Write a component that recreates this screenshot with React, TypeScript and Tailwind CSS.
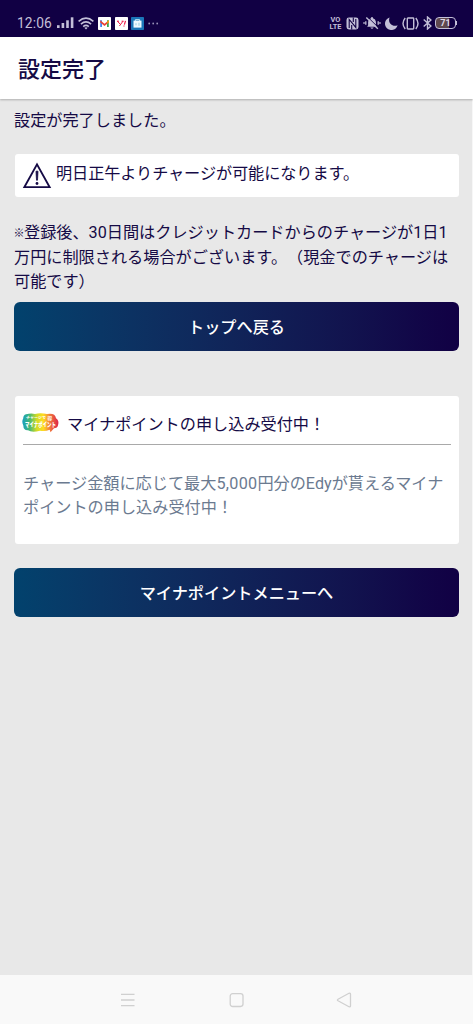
import React from 'react';

const SignalIcon = () => (
  <svg width="17" height="12" viewBox="0 0 17 12" fill="#c3bfd8">
    <rect x="0" y="8.2" width="2.6" height="2.8" />
    <rect x="4.6" y="6" width="2.6" height="5" />
    <rect x="9.2" y="3.3" width="2.6" height="7.7" />
    <rect x="13.8" y="0.3" width="2.6" height="10.7" />
  </svg>
);

const WifiIcon = () => (
  <svg width="16" height="13" viewBox="0 0 16 13" fill="none" stroke="#c3bfd8" strokeWidth="1.6">
    <path d="M0.6 4.3Q8 -2 15.4 4.3M2.9 7.1Q8 2.7 13.1 7.1M5.2 9.6Q8 7.2 10.8 9.6" />
    <path d="M6.3 10.8Q8 9.6 9.7 10.8L8 12.6Z" fill="#c3bfd8" stroke="none" />
  </svg>
);

const MailIcon = () => (
  <svg width="13" height="13" viewBox="0 0 13 13">
    <rect width="13" height="13" rx="0.8" fill="#fff" />
    <path d="M2.2 3.2H4V10H2.2Z" fill="#4285f4" />
    <path d="M9 3.2h1.8V10H9Z" fill="#34a853" />
    <path d="M2.2 3.2L6.5 6.7 10.8 3.2V5.6L6.5 9 2.2 5.6Z" fill="#e84435" />
    <path d="M9.4 4.3l1.4-1.1V5.6L9.4 6.7Z" fill="#f9bb05" />
  </svg>
);

const YahooIcon = () => (
  <svg width="13" height="13" viewBox="0 0 13 13" fill="none" stroke="#ed1747">
    <rect width="13" height="13" rx="0.8" fill="#fff" stroke="none" />
    <path d="M2.4 4.2L5 7M8 4.2L4.4 9M2 4.2h2M6.6 4.2h2" strokeWidth="1" />
    <path d="M10.5 3.8L9.4 7.6M9 8.4v1" strokeWidth="1.2" />
  </svg>
);

const StoreIcon = () => (
  <svg width="13" height="13" viewBox="0 0 13 13">
    <rect width="13" height="13" rx="0.8" fill="#1b76b8" />
    <path d="M2.5 3.6h8v7h-8z" fill="#eefaff" />
    <path d="M4.4 4V2.7h4.2V4" fill="none" stroke="#c9edf8" />
    <path d="M4 6.2h2v2H4zM7 5.8h2v3H7z" fill="#c0e4f0" />
  </svg>
);

const NfcIcon = () => (
  <svg width="13" height="13" viewBox="0 0 13 13" fill="none">
    <path d="M3 0.6H10Q12.5 0.6 12.5 3V10Q12.5 12.4 10 12.4H3Q0.5 12.4 0.5 10V3Q0.5 .6 3 .6Z" fill="#c3bfd8" />
    <path d="M3.2 11V2.5L9.8 10.4V2M5.7 12.5V8M7.3 .5V5" stroke="#110044" strokeWidth="1.1" />
  </svg>
);

const MutedBellIcon = () => (
  <svg width="18" height="14" viewBox="0 0 18 14" fill="none" stroke="#c3bfd8">
    <path d="M4.2 10.8L5.1 9.2V5.8Q5.4 2.8 8 2.3V1.2h2v1.1Q12.6 2.8 12.9 5.8v3.4l.9 1.6Z" fill="#c3bfd8" stroke="none" />
    <path d="M7.3 11.4Q9 14 10.7 11.4Z" fill="#c3bfd8" stroke="none" />
    <path d="M4.3 .7L15.8 12" stroke="#110044" strokeWidth="1" />
    <path d="M3.3 1.5L14.8 12.8" strokeWidth="1.4" />
    <path d="M0.3 7h1.5M2.8 5.2v3.6M16.2 7h1.5M15.2 5.2v3.6" strokeWidth="1.3" />
  </svg>
);

const MoonIcon = () => (
  <svg width="13" height="13" viewBox="0 0 13 13" fill="#c3bfd8">
    <path d="M4.6 0.5C2.5 5.5 7 10.5 12.6 8.3A6.4 6.4 0 1 1 4.6 .5Z" />
  </svg>
);

const VibrateIcon = () => (
  <svg width="17" height="13" viewBox="0 0 17 13" fill="none" stroke="#c3bfd8" strokeWidth="1.4">
    <rect x="5.3" y="1" width="6.4" height="11" rx="0.7" />
    <path d="M3.2 1Q-1.2 6.5 3.2 12M13.8 1Q18.2 6.5 13.8 12" />
  </svg>
);

const BluetoothIcon = () => (
  <svg width="9" height="14" viewBox="0 0 9 14" fill="none" stroke="#c3bfd8" strokeWidth="1.4">
    <path d="M.7 3.6L7.9 10.1 4.5 13V1L7.9 3.9 .7 10.4" />
  </svg>
);

const Battery = () => (
  <span className="flex items-center">
    <span className="flex h-[12px] w-[21px] items-center justify-center rounded-[4px] border border-[#c3bfd8] bg-gradient-to-r from-[#5f494f] from-70% to-[#110044] to-70% font-['Roboto',sans-serif] text-[9px] leading-none font-bold text-[#dfd8e4]">
      71
    </span>
    <span className="h-[4px] w-[1px] bg-[#c3bfd8]" />
  </span>
);

const StatusBar = () => (
  <div className="flex h-[37px] shrink-0 items-start justify-between bg-[#110044] pt-[16px] pr-[16px] pl-[17px]">
    <div className="flex h-[14px] items-center">
      <span className="w-[40px] pt-[2px] font-['Roboto',sans-serif] text-[13.8px] leading-none tracking-[0.1px] text-[#c3bfd8]">
        12:06
      </span>
      <SignalIcon />
      <span className="ml-[4px] flex items-center gap-[4px]">
        <WifiIcon />
        <span className="flex gap-[3.5px]">
          <MailIcon />
          <YahooIcon />
          <StoreIcon />
        </span>
        <svg width="11" height="3" viewBox="0 0 11 3" fill="#9991b8">
          <circle cx="1.2" cy="1.5" r="0.9" />
          <circle cx="5.2" cy="1.5" r="0.9" />
          <circle cx="9.2" cy="1.5" r="0.9" />
        </svg>
      </span>
    </div>
    <div className="flex h-[14px] items-center">
      <span className="flex w-[13px] flex-col items-center font-['Roboto',sans-serif] text-[7.4px] leading-[7px] font-bold text-[#c3bfd8]">
        <span>VO</span>
        <span>LTE</span>
      </span>
      <span className="ml-[4px] flex items-center gap-[4px]">
        <NfcIcon />
        <MutedBellIcon />
        <MoonIcon />
        <VibrateIcon />
        <BluetoothIcon />
      </span>
      <span className="ml-[3px]">
        <Battery />
      </span>
    </div>
  </div>
);

const WarningIcon = () => (
  <svg className="shrink-0" width="30" height="28" viewBox="0 0 30 28" fill="none" stroke="#150a45">
    <path d="M15 2.4L27.6 25.1H2.4Z" strokeWidth="1.9" />
    <path d="M14 9.2h2l-.5 9h-1Z" fill="#150a45" strokeWidth="0.8" />
    <circle cx="15" cy="21.5" r="1.4" fill="#150a45" stroke="none" />
  </svg>
);

const MynaPointLogo = () => (
  <svg className="shrink-0 overflow-visible" width="37" height="20" viewBox="0 0 37 20">
    <defs>
      <linearGradient id="rainbow">
        <stop offset="0" stopColor="#159fc1" />
        <stop offset="0.2" stopColor="#42b875" />
        <stop offset="0.4" stopColor="#d3dc24" />
        <stop offset="0.58" stopColor="#ffdc20" />
        <stop offset="0.76" stopColor="#f17b3d" />
        <stop offset="1" stopColor="#dc2348" />
      </linearGradient>
    </defs>
    <path
      d="M4 1.3Q9-.2 13 .9 19-.5 25 1.1 33-.4 34 5.2 37.5 7.6 36 12.2 35.5 15 32 15.3L28.5 19.2 27.7 16.8Q23 18.8 18 17.7 10 20 6 17.3 1.5 17.7 1.3 12.5-.6 8.7 1.2 5.6 1.2 2.2 4 1.3Z"
      fill="url(#rainbow)"
    />
    <text x="4" y="6.2" textLength="20" lengthAdjust="spacingAndGlyphs" fill="#fff" fontSize="3.6" fontWeight="700" fontFamily="Noto Sans CJK JP, sans-serif">
      チャージで
    </text>
    <text x="25.5" y="6.6" fill="#fff" fontSize="4.6" fontWeight="700" fontFamily="Noto Sans CJK JP, sans-serif">
      得
    </text>
    <text x="3" y="14" textLength="31" lengthAdjust="spacingAndGlyphs" fill="#fff" fontSize="6.6" fontWeight="900" fontFamily="Noto Sans CJK JP, sans-serif">
      マイナポイント
    </text>
  </svg>
);

const GradientButton = ({ children }: { children: React.ReactNode }) => (
  <button className="block h-[49px] w-full rounded-[6px] bg-gradient-to-r from-[#02426d] to-[#110044] pt-[2px] text-center font-medium text-white">
    {children}
  </button>
);

const NavigationBar = () => (
  <nav className="flex h-[49px] shrink-0 items-center justify-between bg-[#f9f9f9] pr-[121px] pl-[120px]">
    <svg width="16" height="16" viewBox="0 0 16 16" fill="none" stroke="#d0d0d0" strokeWidth="1.3">
      <path d="M1 2.3h13.5M1 8h13.5M1 13.7h13.5" />
    </svg>
    <svg className="ml-[1px]" width="16" height="16" viewBox="0 0 16 16" fill="none" stroke="#d0d0d0" strokeWidth="1.3">
      <rect x="1.2" y="1.7" width="12.8" height="12.8" rx="2.4" />
    </svg>
    <svg width="16" height="16" viewBox="0 0 16 16" fill="none" stroke="#d0d0d0" strokeWidth="1.3" strokeLinejoin="round">
      <path d="M2 7.2L13 1.3Q14.5.8 14.5 2.3V13.7Q14.5 15.2 13 14.7L2 8.8Q.8 8 2 7.2Z" />
    </svg>
  </nav>
);

export default function App() {
  return (
    <div className="flex h-[1024px] w-[473px] flex-col bg-[#e8e8e8] font-['Roboto','Noto_Sans_CJK_JP',sans-serif] text-[16.17px] leading-[24.3px] text-[#150a45] [text-spacing-trim:space-all]">
      <StatusBar />
      <header className="z-10 flex h-[62px] shrink-0 items-center bg-white pt-[4px] pl-[18px] text-[22px] font-medium shadow-[0_1px_2px_rgba(0,0,0,0.25)]">
        設定完了
      </header>
      <main className="flex flex-1 flex-col border-r border-[#f7f7f7] pt-[10px] pr-[13px] pl-[14px]">
        <p>設定が完了しました。</p>
        <section className="mt-[21px] ml-[1px] flex h-[43px] shrink-0 rounded-[3px] bg-white pt-[8px] pl-[7px]">
          <WarningIcon />
          <p className="ml-[4px] tracking-[-0.08px]">明日正午よりチャージが可能になります。</p>
        </section>
        <p className="mt-[24px] whitespace-nowrap">
          <span className="inline-block w-[10px] align-[1px] text-[11px] leading-none font-medium">
            <span className="-ml-[0.5px]">※</span>
          </span>
          登録後、30日間はクレジットカードからのチャージが1日1
          <br />
          万円に制限される場合がございます。（現金でのチャージは
          <br />
          可能です）
        </p>
        <div className="mt-[8px]">
          <GradientButton>トップへ戻る</GradientButton>
        </div>
        <section className="mt-[45px] ml-[1px] h-[148px] shrink-0 rounded-[3px] bg-white px-[8px] pt-[16px]">
          <div className="flex h-[33px] items-start border-b border-[#a9a9a9]">
            <span className="mt-[1px] -ml-[1px]">
              <MynaPointLogo />
            </span>
            <h2 className="mt-[1px] ml-[8px]">マイナポイントの申し込み受付中！</h2>
          </div>
          <p className="mt-[27px] whitespace-nowrap text-[#6b7a90]">
            チャージ金額に応じて最大<span className="tracking-[0.3px]">5,000</span>円分のEdyが貰えるマイナ
            <br />
            ポイントの申し込み受付中！
          </p>
        </section>
        <div className="mt-[24px]">
          <GradientButton>マイナポイントメニューへ</GradientButton>
        </div>
      </main>
      <NavigationBar />
    </div>
  );
}
